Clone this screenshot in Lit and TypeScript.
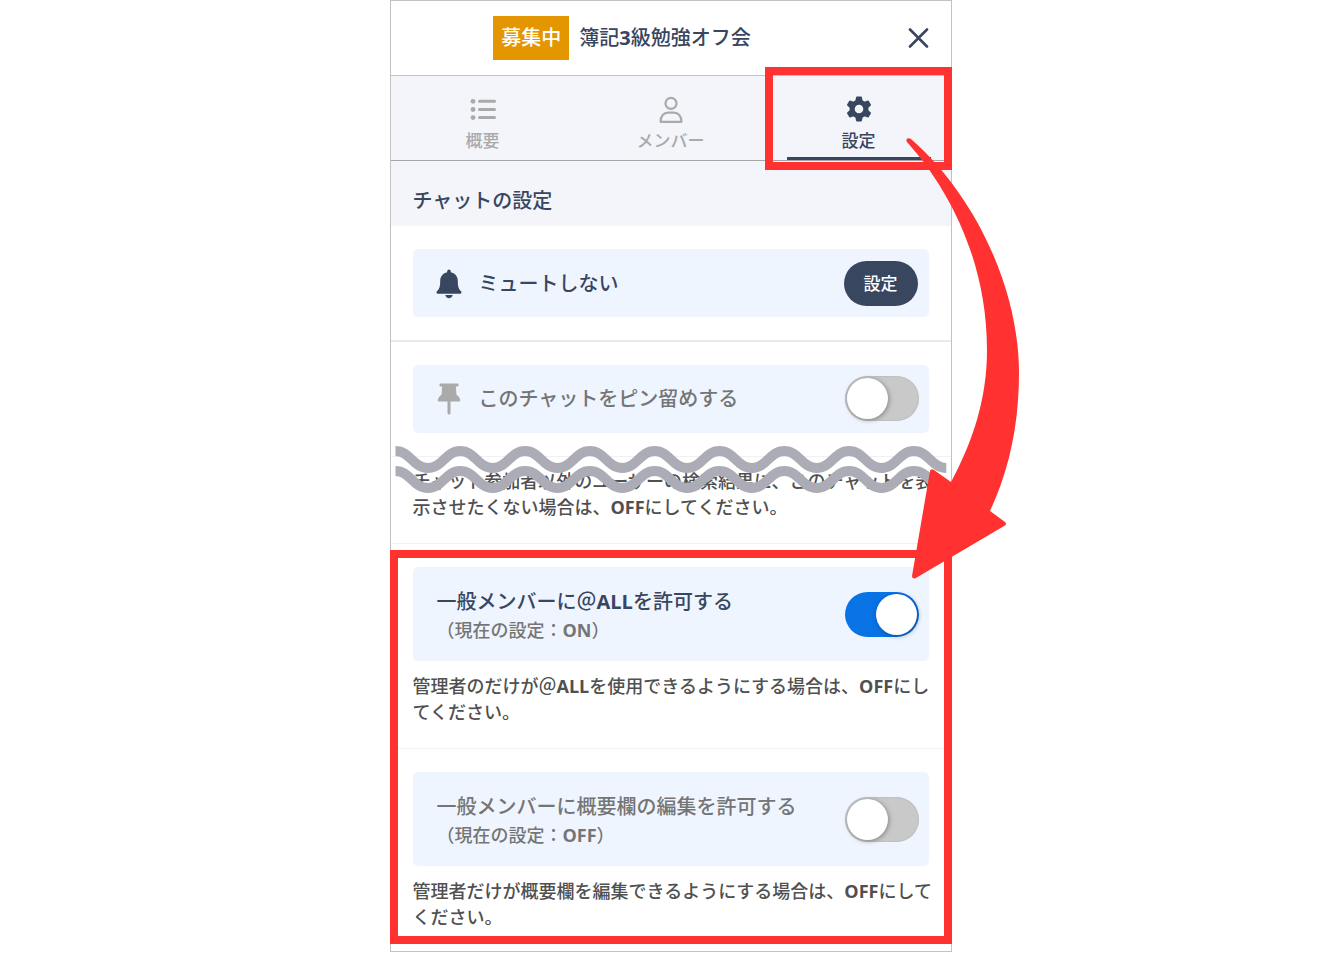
import { LitElement, html, css, svg } from "lit";
import { customElement, property, state } from "lit/decorators.js";

const listIcon = svg`<svg viewBox="0 0 28 28" width="28" height="28" fill="currentColor" aria-hidden="true">
  <circle cx="4" cy="6.3" r="2.4"/><circle cx="4" cy="14.5" r="2.4"/><circle cx="4" cy="22.6" r="2.4"/>
  <rect x="9" y="4.8" width="18" height="3" rx="1.5"/><rect x="9" y="13" width="18" height="3" rx="1.5"/><rect x="9" y="21.1" width="18" height="3" rx="1.5"/>
</svg>`;

const personIcon = svg`<svg viewBox="0 0 28 28" width="28" height="28" fill="none" stroke="currentColor" stroke-width="2.2" stroke-linejoin="round" aria-hidden="true">
  <circle cx="14" cy="8.400" r="5.5"/>
  <path d="M3.6 26.8C3.4 20.7 7 17.600 11 17.600h6c4 0 7.600 3.100 7.400 9.200Z"/>
</svg>`;

const gearIcon = svg`<svg viewBox="0 0 28 28" width="28" height="28" aria-hidden="true">
  <path fill="currentColor" stroke="currentColor" stroke-width="1.6" stroke-linejoin="round" fill-rule="evenodd" d="M11.9 2.400h4.200l.8 3.500 2.700 1.550 3.500-1.100 2.100 3.650-2.600 2.450v3.100l2.600 2.450-2.100 3.650-3.500-1.100-2.700 1.550-.8 3.500h-4.200l-.8-3.500-2.700-1.550-3.500 1.100-2.100-3.650 2.600-2.450v-3.100l-2.600-2.450 2.100-3.650 3.500 1.100 2.700-1.550ZM14 8.900a5.100 5.100 0 1 0 0 10.200a5.100 5.100 0 1 0 0-10.200Z"/>
</svg>`;

const bellIcon = svg`<svg viewBox="0 0 26 30" width="26" height="30" fill="currentColor" aria-hidden="true">
  <path d="M13 .6c1 0 1.800.8 1.800 1.900v.7c4.200.9 7 4.300 7 8.700 0 5.600.9 8 3.300 10.400.9.9.4 2.500-1 2.500H1.900c-1.400 0-1.900-1.600-1-2.500 2.400-2.400 3.300-4.800 3.300-10.400 0-4.400 2.800-7.800 7-8.700v-.7c0-1.100.8-1.900 1.800-1.900Z"/>
  <path d="M9.300 26.100h7.400c-.3 1.900-1.900 3.100-3.700 3.100s-3.400-1.200-3.700-3.100Z"/>
</svg>`;

const pinIcon = svg`<svg viewBox="0 0 26 32" width="26" height="32" fill="currentColor" aria-hidden="true">
  <path d="M4.500.6h17c.6 0 1 .4 1 1v1c0 .6-.4 1-1 1h-1.700l.7 8.200c2 1.100 3.200 2.900 3.700 5.100.2.900-.4 1.600-1.300 1.600h-8.400v11.600c0 .9-.6 1.500-1.500 1.500s-1.500-.6-1.500-1.500V18.500H3.100c-.9 0-1.500-.7-1.300-1.600.5-2.200 1.700-4 3.700-5.100l.7-8.200H4.500c-.6 0-1-.4-1-1v-1c0-.6.4-1 1-1Z"/>
</svg>`;

const closeIcon = svg`<svg viewBox="0 0 21 21" width="21" height="21" fill="none" stroke="currentColor" stroke-width="2.600" stroke-linecap="round" aria-hidden="true">
  <path d="M2 1.500l17 17M19 1.500L2 18.500"/>
</svg>`;

const BASE = css`
  :host {
    font-family: "Open Sans", "Noto Sans CJK JP", sans-serif;
    font-weight: 500;
    --navy: #38465f;
    --gray: #757575;
    --icon-gray: #aaaaaa;
  }
  button, input { font: inherit; }
  .latin { font-weight: 700; }
`;

/* Sets the runs of Latin letters and digits heavier than the kana and kanji around them. */
const mixed = (text: string) =>
  text
    .split(/([A-Za-z0-9]+)/)
    .map((part) => (/^[A-Za-z0-9]/.test(part) ? html`<span class="latin">${part}</span>` : part));

/* The current state, in full-width brackets and with a full-width colon. */
const stateText = (on: boolean) => `\uff08現在の設定\uff1a${on ? "ON" : "OFF"}\uff09`;

@customElement("setting-toggle")
class SettingToggle extends LitElement {
  @property() label = "";
  @property({ type: Boolean }) on = false;
  @property({ type: Boolean }) pin = false;
  @property({ type: Boolean }) status = false;

  static styles = [BASE, css`
    :host { display: block; }
    .card {
      display: flex;
      align-items: center;
      gap: 18px;
      padding: 11px 10px 12px 24px;
      border-radius: 5px;
      background: #eff5ff;
      color: var(--gray);
      cursor: pointer;
    }
    .card.tall { padding-top: 17px; padding-bottom: 17px; }
    .tall .texts { padding-top: 3px; }
    .icon { display: flex; width: 24px; justify-content: center; color: var(--icon-gray); }
    .icon svg { flex: none; }
    .texts { flex: 1; white-space: nowrap; }
    .name { display: block; font-size: 20px; line-height: 30px; }
    .on .name { color: var(--navy); }
    .state { display: block; font-size: 18px; line-height: 27px; }
    .switch {
      appearance: none;
      flex: none;
      display: flex;
      align-items: center;
      width: 74px;
      height: 45px;
      margin: 0;
      padding: 2px;
      border-radius: 23px;
      background: #c9c9c9;
      box-shadow: inset 0 0 2px #aaaaaa;
      cursor: pointer;
    }
    .switch::before {
      content: "";
      width: 41px;
      height: 41px;
      border-radius: 50%;
      background: #ffffff;
      box-shadow: 1px 1px 5px rgba(0, 0, 0, 0.35);
    }
    .switch:checked { justify-content: flex-end; background: #0973e6; box-shadow: none; }
  `];

  private toggle(e: Event) {
    this.on = (e.target as HTMLInputElement).checked;
  }

  render() {
    return html`
      <label class="card ${this.status ? "tall" : ""} ${this.on ? "on" : ""}">
        ${this.pin ? html`<span class="icon">${pinIcon}</span>` : ""}
        <span class="texts">
          <span class="name">${mixed(this.label)}</span>
          ${this.status ? html`<span class="state">${mixed(stateText(this.on))}</span>` : ""}
        </span>
        <input class="switch" type="checkbox" role="switch" .checked=${this.on} @change=${this.toggle} />
      </label>
    `;
  }
}

const TABS = [
  { name: "概要", icon: listIcon },
  { name: "メンバー", icon: personIcon },
  { name: "設定", icon: gearIcon },
];

/* One wave: alternating crests and troughs, half a period apart. */
const wave = (y: number) => {
  const half = 32.4;
  let d = `M5.500 ${y}`;
  for (let i = 0; i < 17; i++) {
    const dy = i % 2 === 0 ? 17 : -17;
    d += `c15 0 17.4 ${dy} ${half} ${dy}`;
  }
  return d;
};

@customElement("app-root")
class AppRoot extends LitElement {
  @state() private tab = 2;

  static styles = [BASE, css`
    :host { display: block; background: #ffffff; }
    .stage { position: relative; width: 100%; max-width: 562px; margin: 0 auto; }
    .panel { border: 1px solid #c2c2c2; color: var(--navy); }
    .header { display: flex; align-items: stretch; min-height: 74px; border-bottom: 1px solid #c2c2c2; }
    .heading { flex: 1; display: flex; align-items: center; justify-content: center; gap: 10px; white-space: nowrap; }
    .badge { padding: 7px 8px; background: #e49600; color: #ffffff; font-size: 20px; line-height: 30px; }
    .title { margin: 0; font-size: 20px; line-height: 30px; font-weight: 500; }
    .close { display: flex; align-items: center; padding: 0 22px 0 54px; border: 0; background: none; color: inherit; cursor: pointer; }
    .tabs { display: grid; grid-template-columns: repeat(3, 1fr); margin: 0 -2px; }
    .tab-strip { overflow: hidden; background: #f3f5fa; border-bottom: 1px solid #a6a6aa; }
    .tab {
      position: relative;
      display: flex;
      flex-direction: column;
      align-items: center;
      gap: 8px;
      padding: 19px 0 9px;
      border: 0;
      background: none;
      color: var(--icon-gray);
      font-size: 17px;
      line-height: 20px;
      cursor: pointer;
    }
    .tab[aria-selected="true"] { color: var(--navy); }
    .tab[aria-selected="true"]::after {
      content: "";
      position: absolute;
      left: 22px;
      right: 22px;
      bottom: 0;
      height: 3px;
      background: var(--navy);
    }
    .section-title { margin: 0; padding: 25px 22px 10px; background: #f3f5fa; font-size: 20px; line-height: 30px; font-weight: 500; }
    .row { padding: 23px 22px; border-bottom: 1px solid #f0f1f7; }
    .row.strong { border-bottom: 2px solid #e9e9e9; }
    .row:last-child { padding-bottom: 21px; border-bottom: 0; }
    .row.text-only { padding-top: 11px; }
    .mute { display: flex; align-items: center; gap: 18px; padding: 12px 11px 11px 24px; border-radius: 5px; background: #eff5ff; }
    .mute-icon { display: flex; width: 24px; justify-content: center; }
    .mute-icon svg { flex: none; }
    .mute-name { flex: 1; font-size: 20px; line-height: 30px; }
    .pill { width: 74px; height: 45px; padding: 0; border: 0; border-radius: 23px; background: var(--navy); color: #ffffff; font-size: 17px; line-height: 24px; cursor: pointer; }
    .note { margin: 12px 0 0; color: #505050; font-size: 18px; line-height: 26px; white-space: nowrap; }
    .text-only .note { margin-top: 0; }
    .frame { position: absolute; box-sizing: border-box; border: 8px solid #ff3131; pointer-events: none; }
    .frame-tab { top: 67px; right: 0; width: 187px; height: 103px; }
    .frame-options { top: 550px; left: 0; right: 0; bottom: 8px; }
    .drawing { position: absolute; top: 0; left: 0; overflow: visible; pointer-events: none; }
  `];

  render() {
    return html`
      <div class="stage">
        <main class="panel">
          <header class="header">
            <div class="heading">
              <span class="badge">募集中</span>
              <h1 class="title">${mixed("簿記3級勉強オフ会")}</h1>
            </div>
            <button class="close" aria-label="閉じる">${closeIcon}</button>
          </header>
          <div class="tab-strip">
            <div class="tabs" role="tablist">
              ${TABS.map((t, i) => html`
                <button class="tab" role="tab" aria-selected=${i === this.tab ? "true" : "false"} @click=${() => (this.tab = i)}>
                  ${t.icon}<span>${t.name}</span>
                </button>`)}
            </div>
          </div>
          <h2 class="section-title">チャットの設定</h2>
          <section class="row strong">
            <div class="mute">
              <span class="mute-icon">${bellIcon}</span>
              <span class="mute-name">ミュートしない</span>
              <button class="pill">設定</button>
            </div>
          </section>
          <section class="row">
            <setting-toggle label="このチャットをピン留めする" pin></setting-toggle>
          </section>
          <section class="row text-only">
            <p class="note">チャット参加者以外のユーザーの検索結果に、このチャットを表<br />${mixed("示させたくない場合は、OFFにしてください。")}</p>
          </section>
          <section class="row">
            <setting-toggle label=${"一般メンバーに\uff20ALLを許可する"} status on></setting-toggle>
            <p class="note">${mixed("管理者のだけが\uff20ALLを使用できるようにする場合は、OFFにし")}<br />てください。</p>
          </section>
          <section class="row">
            <setting-toggle label="一般メンバーに概要欄の編集を許可する" status></setting-toggle>
            <p class="note">${mixed("管理者だけが概要欄を編集できるようにする場合は、OFFにして")}<br />ください。</p>
          </section>
        </main>
        <div class="frame frame-tab"></div>
        <div class="frame frame-options"></div>
        <svg class="drawing" width="562" height="600" viewBox="0 0 562 600" aria-hidden="true">
          <g fill="none" stroke="#acacb6" stroke-width="10">
            <path d=${wave(451)} />
            <path d=${wave(471)} />
          </g>
          <path fill="#ff3131" d="M517 142C515 139 518 137 521 139C582 192 629 285 629 373C629 425 619 470 600 511L615 522Q617 524 615 525.500L525 578.500Q522 579 522 576L540 471Q541 468 544 470L561 482C582 443 597 400 597 350C597 262 560 190 517 142Z" />
        </svg>
      </div>
    `;
  }
}
